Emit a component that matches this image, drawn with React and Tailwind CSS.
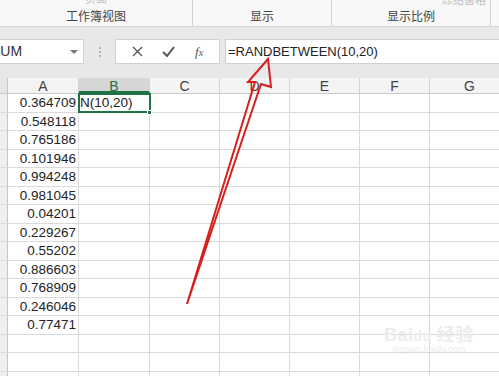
const cols = [
  { name: "A", w: "w-[71px]" },
  { name: "B", w: "w-[71px]" },
  { name: "C", w: "w-[70px]" },
  { name: "D", w: "w-[70px]" },
  { name: "E", w: "w-[70px]" },
  { name: "F", w: "w-[70px]" },
  { name: "G", w: "w-[80px]" },
];

const values = [
  "0.364709",
  "0.548118",
  "0.765186",
  "0.101946",
  "0.994248",
  "0.981045",
  "0.04201",
  "0.229267",
  "0.55202",
  "0.886603",
  "0.768909",
  "0.246046",
  "0.77471",
  "",
  "",
  "",
];

const RibbonGroup = ({ width, label, top }) => (
  <div className={`${width} h-full border-r border-[#d4d4d4] flex flex-col items-center justify-between shrink-0`}>
    <div className="-mt-[9px] text-[11px] text-[#c0c0c0]">{top}</div>
    <div className="pb-[3px] text-[12px] leading-none text-[#444]">{label}</div>
  </div>
);

const Row = ({ value, index }) => (
  <div className="flex h-[18.5px] border-b border-[#dadada]">
    <div className="w-[8px] shrink-0 bg-[#efefef] border-r border-[#c6c6c6]" />
    {cols.map((c) => {
      const selected = index === 0 && c.name === "B";
      return (
        <div
          key={c.name}
          className={`${c.w} shrink-0 border-r border-[#dadada] text-[13.5px] leading-[17px] text-[#222] whitespace-nowrap ${
            c.name === "A" ? "text-right pr-[2px]" : "pl-[1px]"
          } ${selected ? "relative outline-2 outline-[#217346] -outline-offset-1" : ""}`}
        >
          {c.name === "A" ? value : selected ? "N(10,20)" : ""}
          {selected && (
            <span className="absolute right-[-3px] bottom-[-3px] w-[5px] h-[5px] bg-[#217346] border border-white" />
          )}
        </div>
      );
    })}
  </div>
);

export default function App() {
  return (
    <div
      className="relative w-[499px] h-[376px] overflow-hidden bg-white"
      style={{ fontFamily: '"Liberation Sans", "Noto Sans CJK SC", sans-serif' }}
    >
      {/* Ribbon */}
      <div className="flex h-[27px] bg-[#f8f8f8] border-b border-[#d8d8d8] overflow-hidden">
        <RibbonGroup width="w-[193px]" label="工作簿视图" top="页面" />
        <RibbonGroup width="w-[139px]" label="显示" top="" />
        <div className="w-[159px] h-full border-r border-[#d4d4d4] flex flex-col shrink-0">
          <div className="-mt-[8px] self-end pr-[4px] text-[11px] text-[#c0c0c0]">冻结窗格</div>
          <div className="mt-auto pb-[3px] text-center text-[12px] leading-none text-[#444]">显示比例</div>
        </div>
      </div>

      {/* Formula bar */}
      <div className="bg-[#e8e8e8] pt-[12px] pb-[14px]">
        <div className="flex h-[25px] items-stretch">
          <div className="w-[84px] shrink-0 bg-white border border-[#d0d0d0] border-l-0 flex items-center overflow-hidden">
            <span className="-ml-[9px] text-[14px] text-[#333]">SUM</span>
            <span className="ml-auto mr-[5px] w-0 h-0 border-l-[4px] border-r-[4px] border-t-[4px] border-l-transparent border-r-transparent border-t-[#777]" />
          </div>
          <div className="w-[31px] shrink-0 flex flex-col items-center justify-center gap-[2px]">
            <span className="w-[2px] h-[2px] bg-[#b5b5b5]" />
            <span className="w-[2px] h-[2px] bg-[#b5b5b5]" />
            <span className="w-[2px] h-[2px] bg-[#b5b5b5]" />
          </div>
          <div className="w-[105px] shrink-0 bg-white border border-[#d0d0d0] flex items-center justify-around px-[6px]">
            <svg width="11" height="11" viewBox="0 0 11 11" stroke="#555" strokeWidth="1.3" fill="none">
              <path d="M1 1l9 9M10 1l-9 9" />
            </svg>
            <svg width="13" height="11" viewBox="0 0 13 11" stroke="#555" strokeWidth="2" fill="none">
              <path d="M1 6l4 4 7-9" />
            </svg>
            <span className="italic text-[13px] text-[#555]" style={{ fontFamily: '"Liberation Serif", serif' }}>
              f<span className="text-[10px]">x</span>
            </span>
          </div>
          <div className="ml-[5px] flex-1 bg-white border border-[#d0d0d0] border-r-0 flex items-center pl-[2px] text-[13px] text-[#222]">
            =RANDBETWEEN(10,20)
          </div>
        </div>
      </div>

      {/* Column headers */}
      <div className="flex h-[16px] bg-[#f4f4f4] border-b border-[#cacaca]">
        <div className="w-[8px] shrink-0 bg-[#e6e6e6] border-r border-[#c6c6c6]" />
        {cols.map((c) => (
          <div
            key={c.name}
            className={`${c.w} shrink-0 border-r border-[#d4d4d4] text-center text-[14px] leading-[16px] ${
              c.name === "B" ? "bg-[#d6d6d6] text-[#217346] border-b-2 border-b-[#217346]" : "text-[#444]"
            }`}
          >
            {c.name}
          </div>
        ))}
      </div>

      {/* Rows */}
      <div>
        {values.map((v, i) => (
          <Row key={i} value={v} index={i} />
        ))}
      </div>

      {/* Watermark */}
      <div className="absolute left-[384px] top-[326px] flex flex-col items-center text-[#ececec] select-none">
        <div className="text-[18px] leading-none font-bold tracking-wide">
          Bai<span className="text-[14px]">du</span> 经验
        </div>
        <div className="text-[9px] leading-tight">jingyan.baidu.com</div>
      </div>

      {/* Red arrow */}
      <svg className="absolute inset-0 pointer-events-none" width="499" height="376" viewBox="0 0 499 376">
        <polygon
          points="268,59 271,87 261,84 187,304 255,82 248,82"
          fill="none"
          stroke="#d81e1e"
          strokeWidth="2"
          strokeLinejoin="miter"
        />
      </svg>
    </div>
  );
}
